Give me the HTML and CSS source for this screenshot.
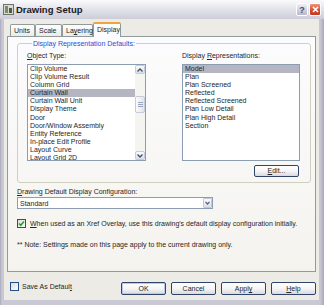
FILE: index.html
```html
<!DOCTYPE html>
<html lang="en">
<head>
  <meta charset="UTF-8">
  <meta name="viewport" content="width=device-width, initial-scale=1.0">
  <title>Drawing Setup</title>
  <link rel="stylesheet" href="styles.css">
</head>
<body>
  <div class="window">
    <div class="titlebar">
      <svg class="app-icon" width="11" height="11" viewBox="0 0 11 11">
        <rect x="0.5" y="0.5" width="10" height="10" fill="#d9dcd2" stroke="#6f7468"/>
        <rect x="2" y="2" width="3" height="7" fill="#7d8a6c"/>
        <rect x="6" y="4" width="3" height="5" fill="#4f5d44"/>
      </svg>
      <span class="title">Drawing Setup</span>
      <span class="cap-btn cap-help">?</span>
      <span class="cap-btn cap-close">
        <svg width="7" height="7" viewBox="0 0 7 7"><path d="M1 1 L6 6 M6 1 L1 6" stroke="#fff" stroke-width="1.6"/></svg>
      </span>
    </div>

    <div class="client">
      <div class="tabs">
        <div class="tab tab-units">Units</div>
        <div class="tab tab-scale">Scale</div>
        <div class="tab tab-layering">La<u>y</u>ering</div>
        <div class="tab tab-display active">Display</div>
      </div>

      <div class="panel">
        <fieldset class="group">
          <legend>Display Representation Defaults:</legend>
          <div class="columns">
            <div class="col col-left">
              <div class="field-label"><u>O</u>bject Type:</div>
              <div class="listbox">
                <ul class="items">
                  <li>Clip Volume</li>
                  <li>Clip Volume Result</li>
                  <li>Column Grid</li>
                  <li class="sel">Curtain Wall</li>
                  <li>Curtain Wall Unit</li>
                  <li>Display Theme</li>
                  <li>Door</li>
                  <li>Door/Window Assembly</li>
                  <li>Entity Reference</li>
                  <li>In-place Edit Profile</li>
                  <li>Layout Curve</li>
                  <li>Layout Grid 2D</li>
                </ul>
                <div class="scrollbar">
                  <div class="sb-btn">
                    <svg width="6" height="4" viewBox="0 0 6 4"><path d="M0.5 3.5 L3 1 L5.5 3.5" fill="none" stroke="#3d4f72" stroke-width="1.3"/></svg>
                  </div>
                  <div class="sb-track">
                    <div class="sb-thumb">
                      <svg width="5" height="5" viewBox="0 0 5 5"><path d="M0 0.5 H5 M0 2.5 H5 M0 4.5 H5" stroke="#9aa6bd" stroke-width="1"/></svg>
                    </div>
                  </div>
                  <div class="sb-btn">
                    <svg width="6" height="4" viewBox="0 0 6 4"><path d="M0.5 0.5 L3 3 L5.5 0.5" fill="none" stroke="#3d4f72" stroke-width="1.3"/></svg>
                  </div>
                </div>
              </div>
            </div>
            <div class="col col-right">
              <div class="field-label">Display <u>R</u>epresentations:</div>
              <div class="listbox">
                <ul class="items">
                  <li class="sel">Model</li>
                  <li>Plan</li>
                  <li>Plan Screened</li>
                  <li>Reflected</li>
                  <li>Reflected Screened</li>
                  <li>Plan Low Detail</li>
                  <li>Plan High Detail</li>
                  <li>Section</li>
                </ul>
              </div>
              <button class="btn btn-edit"><u>E</u>dit...</button>
            </div>
          </div>
        </fieldset>

        <div class="field-label config-label"><u>D</u>rawing Default Display Configuration:</div>
        <div class="combo">
          <span class="combo-text">Standard</span>
          <span class="combo-btn">
            <svg width="5" height="4" viewBox="0 0 5 4"><path d="M0.5 0.8 L2.5 3 L4.5 0.8" fill="none" stroke="#4d6185" stroke-width="1.2"/></svg>
          </span>
        </div>

        <div class="check-row xref-row">
          <span class="checkbox">
            <svg width="7" height="7" viewBox="0 0 7 7"><path d="M1 3.5 L2.8 5.3 L6 1.5" fill="none" stroke="#21a121" stroke-width="1.5"/></svg>
          </span>
          <span><u>W</u>hen used as an Xref Overlay, use this drawing's default display configuration initially.</span>
        </div>

        <p class="note">** Note: Settings made on this page apply to the current drawing only.</p>
      </div>

      <div class="footer">
        <div class="check-row">
          <span class="checkbox"></span>
          <span>Save As Defaul<u>t</u></span>
        </div>
        <div class="buttons">
          <button class="btn btn-default">OK</button>
          <button class="btn">Cancel</button>
          <button class="btn">Appl<u>y</u></button>
          <button class="btn"><u>H</u>elp</button>
        </div>
      </div>
    </div>
  </div>
</body>
</html>
```

FILE: styles.css
```css
body {
  margin: 0;
  font-family: "Liberation Sans", Arial, sans-serif;
  font-size: 7px;
  color: #262626;
  background: #fff;
}

.window {
  width: 324px;
  height: 305px;
  display: flex;
  flex-direction: column;
  background: linear-gradient(90deg, #a9a9ba, #c9c9d6 2px, #c9c9d6 320px, #a9a9ba);
  overflow: hidden;
}

/* title bar */
.titlebar {
  height: 19px;
  flex: none;
  display: flex;
  align-items: center;
  padding: 0 3px;
  background: linear-gradient(#fbfbfd, #e4e4ec 45%, #cdcdd9);
}

.app-icon {
  flex: none;
}

.title {
  margin-left: 2px;
  font-size: 9.5px;
  font-weight: bold;
  color: #1a1a1a;
}

.cap-btn {
  width: 12px;
  height: 13px;
  box-sizing: border-box;
  border: 1px solid #fff;
  border-radius: 2px;
  display: flex;
  align-items: center;
  justify-content: center;
}

.cap-help {
  margin-left: auto;
  background: linear-gradient(#eeeef4, #b8b8c9);
  color: #4b4b6e;
  font-size: 9px;
  font-weight: bold;
}

.cap-close {
  margin-left: 1px;
  background: linear-gradient(#ee9480, #d24a2f 60%, #c03a22);
}

/* client area */
.client {
  flex: 1;
  margin: 0 5px 5px 4px;
  padding-top: 3px;
  background: #ecebe5;
  display: flex;
  flex-direction: column;
}

.tabs {
  display: flex;
  align-items: flex-end;
  height: 14px;
  margin-left: 6px;
}

.tab {
  height: 12px;
  box-sizing: border-box;
  border: 1px solid #919b9c;
  border-bottom: none;
  border-radius: 2px 2px 0 0;
  background: linear-gradient(#fefefe, #ecebe6);
  padding-left: 3px;
  line-height: 11px;
}

.tab-units { width: 25px; }
.tab-scale { width: 27px; }
.tab-layering { width: 31px; }
.tab-display { width: 28px; }

.tab.active {
  position: relative;
  z-index: 1;
  height: 15px;
  margin-bottom: -1px;
  border-top: 2px solid #f0a43a;
  background: #fcfcfe;
  line-height: 12px;
}

.panel {
  width: 309px;
  height: 236px;
  margin-left: 3px;
  box-sizing: border-box;
  border: 1px solid #919b9c;
  background: linear-gradient(#fcfcfe, #f4f3ee);
  padding: 2px 4px 0 9px;
}

.group {
  margin: 0;
  padding: 3px 9px 5px 9px;
  border: 1px solid #d0d0bf;
  border-radius: 3px;
  min-width: 0;
}

.group legend {
  margin-left: 5px;
  padding: 0 1px;
  line-height: 9px;
  color: #1f4fd6;
}

.columns {
  display: flex;
  gap: 36px;
}

.col {
  display: flex;
  flex-direction: column;
}

.col-left { width: 119px; }
.col-right { width: 118px; }

.field-label {
  line-height: 9px;
  padding-bottom: 4px;
  white-space: nowrap;
}

.listbox {
  height: 97px;
  box-sizing: border-box;
  border: 1px solid #8c9cb1;
  background: #fff;
  display: flex;
  overflow: hidden;
}

.items {
  flex: 1;
  margin: 0;
  padding: 0;
  list-style: none;
  overflow: hidden;
}

.items li {
  height: 8.1px;
  line-height: 8px;
  padding-left: 2px;
  white-space: nowrap;
}

.items li.sel {
  background: #b6b6c2;
}

.scrollbar {
  width: 10px;
  display: flex;
  flex-direction: column;
  background: #f4f4f1;
}

.sb-btn {
  height: 9px;
  box-sizing: border-box;
  border: 1px solid #c4cbd9;
  border-radius: 2px;
  background: linear-gradient(#fbfbfc, #dcdde6);
  display: flex;
  align-items: center;
  justify-content: center;
}

.sb-track {
  flex: 1;
  padding-top: 22px;
}

.sb-thumb {
  height: 17px;
  box-sizing: border-box;
  border: 1px solid #c4cbd9;
  border-radius: 2px;
  background: linear-gradient(90deg, #fbfbfc, #e3e4eb);
  display: flex;
  align-items: center;
  justify-content: center;
}

.btn {
  width: 45px;
  height: 13px;
  box-sizing: border-box;
  padding: 0;
  border: 1px solid #2f4468;
  border-radius: 2px;
  background: linear-gradient(#ffffff, #f4f4f4 55%, #d8d8e0);
  font: inherit;
  line-height: 11px;
  color: #262626;
  text-align: center;
}

.btn-edit {
  align-self: flex-end;
  margin: 4px 1px 0 0;
  height: 12px;
  line-height: 10px;
}

.btn-default {
  box-shadow: inset 0 0 0 1px #b9c8ec;
}

.config-label {
  margin-top: 4px;
  padding-bottom: 1px;
}

.combo {
  width: 196px;
  height: 12px;
  box-sizing: border-box;
  border: 1px solid #8c9cb1;
  background: #fff;
  display: flex;
  align-items: center;
}

.combo-text {
  flex: 1;
  padding-left: 2px;
}

.combo-btn {
  width: 9px;
  height: 10px;
  box-sizing: border-box;
  border: 1px solid #c1c8d6;
  border-radius: 1px;
  background: linear-gradient(#fbfbfc, #dcdde6);
  display: flex;
  align-items: center;
  justify-content: center;
}

.check-row {
  display: flex;
  align-items: center;
  gap: 4px;
  line-height: 9px;
  white-space: nowrap;
}

.xref-row {
  margin-top: 10px;
}

.checkbox {
  width: 9px;
  height: 9px;
  box-sizing: border-box;
  border: 1px solid #24508a;
  background: linear-gradient(135deg, #dcdcd6, #fff);
  display: flex;
  align-items: center;
  justify-content: center;
  flex: none;
}

.note {
  margin: 12px 0 0;
  line-height: 9px;
}

/* bottom row */
.footer {
  display: flex;
  align-items: flex-start;
  padding: 10px 3px 0 6px;
}

.footer .check-row {
  gap: 3px;
}

.buttons {
  margin-left: auto;
  display: flex;
  gap: 5px;
}
```
